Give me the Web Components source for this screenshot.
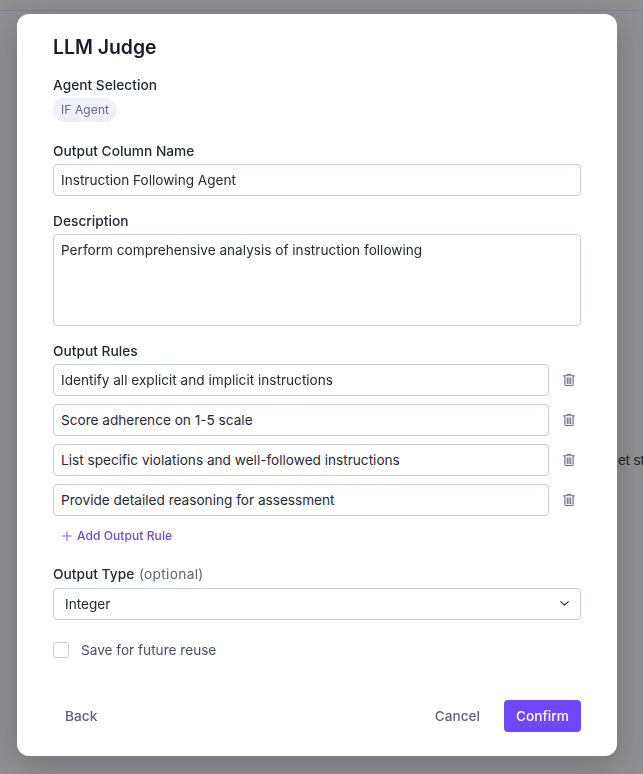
<!DOCTYPE html>
<html lang="en">
<head>
<meta charset="utf-8">
<title>LLM Judge</title>
<style>
  html, body { margin: 0; height: 100%; }
  body { font-family: Inter, "Liberation Sans", sans-serif; overflow: hidden; background: #8f8f92; }
</style>
</head>
<body>
<page-backdrop>et st</page-backdrop>
<judge-modal heading="LLM Judge">
  <form-field label="Agent Selection">
    <agent-chip>IF Agent</agent-chip>
  </form-field>
  <form-field label="Output Column Name">
    <text-box value="Instruction Following Agent"></text-box>
  </form-field>
  <form-field label="Description">
    <text-box multiline value="Perform comprehensive analysis of instruction following"></text-box>
  </form-field>
  <form-field label="Output Rules">
    <rule-list>
      <rule-row value="Identify all explicit and implicit instructions"></rule-row>
      <rule-row value="Score adherence on 1-5 scale"></rule-row>
      <rule-row value="List specific violations and well-followed instructions"></rule-row>
      <rule-row value="Provide detailed reasoning for assessment"></rule-row>
    </rule-list>
    <add-rule>Add Output Rule</add-rule>
  </form-field>
  <form-field label="Output Type" hint="(optional)">
    <select-box value="Integer"></select-box>
  </form-field>
  <check-row>Save for future reuse</check-row>
</judge-modal>

<script>
class PageBackdrop extends HTMLElement {
  constructor() {
    super();
    this.attachShadow({ mode: "open" }).innerHTML = `
    <style>
      :host {
        display: block;
        height: 774px;
        overflow: hidden;
        background: #909092;
      }
      .bar { height: 10px; border-bottom: 1px solid #7f8090; }
      .body {
        padding: 441px 0 0 618px;
        white-space: nowrap;
        font: 14px/17px "Liberation Sans", sans-serif;
        color: #1d1d22;
      }
    </style>
    <div class="bar"></div>
    <div class="body"><slot></slot></div>
    `;
  }
}

class JudgeModal extends HTMLElement {
  constructor() {
    super();
    const root = this.attachShadow({ mode: "open" });
    root.innerHTML = `
    <style>
      :host {
        position: fixed;
        top: 14px;
        left: 17px;
        width: 600px;
        height: 742px;
        box-sizing: border-box;
        display: flex;
        flex-direction: column;
        padding: 20px 36px 24px;
        background: #fff;
        border-radius: 12px;
        box-shadow: 0 8px 32px rgba(40, 40, 50, .28);
        color: #1a1c2b;
      }
      h1 { margin: 0 0 15px; font-size: 19.4px; line-height: 26px; font-weight: 600; }
      .fields { display: flex; flex-direction: column; gap: 15px; }
      footer { margin-top: auto; display: flex; align-items: center; }
      button {
        font: 500 13.7px/20px Inter, sans-serif;
        height: 32px;
        padding: 0 12px;
        border: 0;
        border-radius: 4px;
        background: none;
        color: #5f6478;
      }
      .back { margin-right: auto; }
      .cancel { letter-spacing: -.05px; }
      .confirm { width: 77px; padding: 0; margin-left: 12px; background: #6e47ff; color: #fff; }
    </style>
    <h1></h1>
    <div class="fields"><slot></slot></div>
    <footer>
      <button class="back">Back</button>
      <button class="cancel">Cancel</button>
      <button class="confirm">Confirm</button>
    </footer>
    `;
    root.querySelector("h1").textContent = this.getAttribute("heading");
  }
}

class FormField extends HTMLElement {
  constructor() {
    super();
    const root = this.attachShadow({ mode: "open" });
    root.innerHTML = `
    <style>
      :host { display: block; }
      .label { font-size: 13.75px; line-height: 20px; font-weight: 500; color: #272938; margin-bottom: 3px; }
      .hint { margin-left: 1px; font-weight: 400; color: #5f6478; letter-spacing: .3px; }
    </style>
    <div class="label"><span class="name"></span> <span class="hint"></span></div>
    <slot></slot>
    `;
    root.querySelector(".name").textContent = this.getAttribute("label");
    root.querySelector(".hint").textContent = this.getAttribute("hint") || "";
  }
}

class AgentChip extends HTMLElement {
  constructor() {
    super();
    this.attachShadow({ mode: "open" }).innerHTML = `
    <style>
      :host {
        display: flex;
        box-sizing: border-box;
        width: fit-content;
        align-items: center;
        height: 24px;
        margin-bottom: 4px;
        padding: 0 8px 1px;
        border-radius: 12px;
        background: #f0f0f9;
        color: #666b80;
        font-size: 12px;
        letter-spacing: .1px;
      }
    </style>
    <slot></slot>
    `;
  }
}

class TextBox extends HTMLElement {
  static get observedAttributes() {
    return ["value"];
  }

  constructor() {
    super();
    this.attachShadow({ mode: "open" }).innerHTML = `
    <style>
      :host {
        display: block;
        box-sizing: border-box;
        height: 32px;
        padding: 5px 7px;
        border: 1px solid #c8cbe0;
        border-radius: 4px;
        background: #fff;
        color: #272938;
        font-size: 13.62px;
        line-height: 20px;
      }
      :host([multiline]) { height: 92px; }
    </style>
    <span></span>
    `;
  }

  attributeChangedCallback(name, oldValue, value) {
    this.shadowRoot.querySelector("span").textContent = value;
  }
}

class RuleList extends HTMLElement {
  constructor() {
    super();
    this.attachShadow({ mode: "open" }).innerHTML = `
    <style>
      :host { display: flex; flex-direction: column; gap: 8px; }
    </style>
    <slot></slot>
    `;
  }
}

class RuleRow extends HTMLElement {
  constructor() {
    super();
    const root = this.attachShadow({ mode: "open" });
    root.innerHTML = `
    <style>
      :host { display: flex; align-items: center; }
      text-box { flex: 1; }
      .trash { flex: none; width: 32px; display: flex; justify-content: flex-end; padding-right: 5px; box-sizing: border-box; }
      svg { display: block; }
    </style>
    <text-box></text-box>
    <div class="trash">
      <svg width="14" height="14" viewBox="0 0 14 14" fill="none" stroke="#5f6478" stroke-width="1" stroke-linecap="round" stroke-linejoin="round">
        <path d="M1.5 2.9h11"/>
        <path d="M5 2.7V1.8c0-.2.2-.4.4-.4h3.2c.2 0 .4.2.4.4v.9"/>
        <path d="M2.9 3v8.6c0 .6.4 1 1 1h6.2c.6 0 1-.4 1-1V3" fill="#eeeef2"/>
        <path d="M5.3 5v5.6M7 5v5.6M8.7 5v5.6" stroke-width=".9"/>
      </svg>
    </div>
    `;
    root.querySelector("text-box").setAttribute("value", this.getAttribute("value"));
  }
}

class AddRule extends HTMLElement {
  constructor() {
    super();
    this.attachShadow({ mode: "open" }).innerHTML = `
    <style>
      :host {
        display: flex;
        box-sizing: border-box;
        align-items: center;
        gap: 4px;
        height: 24px;
        margin: 8px 0 1px;
        padding: 0 0 1px 8px;
        color: #6e47e8;
        font-size: 12px;
        font-weight: 500;
        letter-spacing: .08px;
      }
      svg { display: block; }
    </style>
    <svg width="12" height="12" viewBox="0 0 12 12" fill="none" stroke="#8465ee" stroke-width="1.1" stroke-linecap="round">
      <path d="M6 1.5v9M1.5 6h9"/>
    </svg>
    <slot></slot>
    `;
  }
}

class SelectBox extends HTMLElement {
  constructor() {
    super();
    const root = this.attachShadow({ mode: "open" });
    root.innerHTML = `
    <style>
      :host {
        display: flex;
        align-items: center;
        justify-content: space-between;
        box-sizing: border-box;
        height: 32px;
        margin-top: 4px;
        padding: 0 11px 1px;
        border: 1px solid #c8cbe0;
        border-radius: 4px;
        color: #272938;
        font-size: 13.62px;
      }
      svg { display: block; }
    </style>
    <span></span>
    <svg width="9" height="5" viewBox="0 0 9 5" fill="none" stroke="#272938" stroke-width="1.1" stroke-linecap="round" stroke-linejoin="round">
      <path d="M.7.7l3.8 3.5L8.3.7"/>
    </svg>
    `;
    root.querySelector("span").textContent = this.getAttribute("value");
  }
}

class CheckRow extends HTMLElement {
  constructor() {
    super();
    this.attachShadow({ mode: "open" }).innerHTML = `
    <style>
      :host {
        display: flex;
        align-items: center;
        gap: 12px;
        margin-top: 5px;
        color: #4a4e63;
        font-size: 13.62px;
        line-height: 20px;
      }
      .box { box-sizing: border-box; width: 16px; height: 16px; border: 1px solid #c8cbe0; border-radius: 3px; background: #fff; }
    </style>
    <div class="box"></div>
    <slot></slot>
    `;
  }
}

customElements.define("page-backdrop", PageBackdrop);
customElements.define("text-box", TextBox);
customElements.define("form-field", FormField);
customElements.define("agent-chip", AgentChip);
customElements.define("rule-list", RuleList);
customElements.define("rule-row", RuleRow);
customElements.define("add-rule", AddRule);
customElements.define("select-box", SelectBox);
customElements.define("check-row", CheckRow);
customElements.define("judge-modal", JudgeModal);
</script>
</body>
</html>
